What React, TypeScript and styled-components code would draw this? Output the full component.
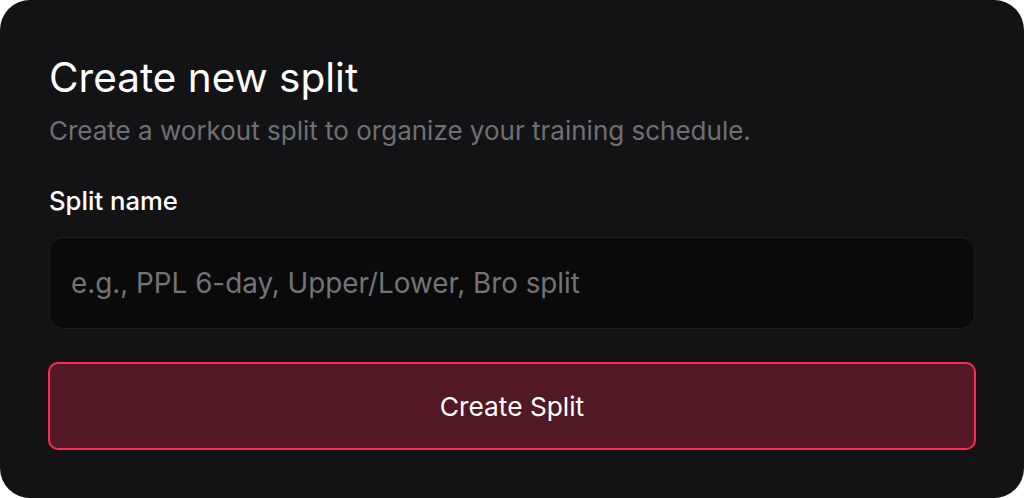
import React from "react";
import styled, { createGlobalStyle } from "styled-components";

const Global = createGlobalStyle`
  html, body { margin: 0; padding: 0; background: #ffffff; }
  body { font-family: Inter, "Liberation Sans", sans-serif; }
  * { box-sizing: border-box; }
`;

const Card = styled.div`
  width: 1024px;
  height: 498px;
  background: #131315;
  border-radius: 30px;
  padding: 54px 49px 0 49px;
  display: flex;
  flex-direction: column;
  font-family: Inter, "Liberation Sans", sans-serif;
`;

const Title = styled.h1`
  margin: 0;
  font-size: 40.5px;
  line-height: 48px;
  font-weight: 400;
  color: #ffffff;
`;

const Subtitle = styled.p`
  margin: 13px 0 0 0;
  font-size: 26px;
  line-height: 32px;
  color: #6f6f74;
`;

const Label = styled.label`
  margin-top: 38px;
  font-size: 25.7px;
  line-height: 32px;
  font-weight: 500;
  color: #ffffff;
`;

const Input = styled.input`
  margin-top: 20px;
  height: 92px;
  width: 100%;
  flex-shrink: 0;
  background: #0a0a0b;
  border: 1px solid #1f1f22;
  border-radius: 14px;
  padding: 0 21px;
  font-family: Inter, "Liberation Sans", sans-serif;
  font-size: 27.8px;
  color: #ffffff;
  outline: none;
  &::placeholder { color: #737378; }
`;

const Button = styled.button`
  margin: 33px -1px 0 -1px;
  height: 88px;
  flex-shrink: 0;
  background: #521824;
  border: 2px solid #ff2a55;
  border-radius: 10px;
  color: #ffffff;
  font-family: Inter, "Liberation Sans", sans-serif;
  font-size: 26.3px;
  font-weight: 400;
  cursor: pointer;
`;

export default function App() {
  return (
    <>
      <Global />
      <Card>
        <Title>Create new split</Title>
        <Subtitle>Create a workout split to organize your training schedule.</Subtitle>
        <Label htmlFor="split-name">Split name</Label>
        <Input id="split-name" placeholder="e.g., PPL 6-day, Upper/Lower, Bro split" />
        <Button>Create Split</Button>
      </Card>
    </>
  );
}
